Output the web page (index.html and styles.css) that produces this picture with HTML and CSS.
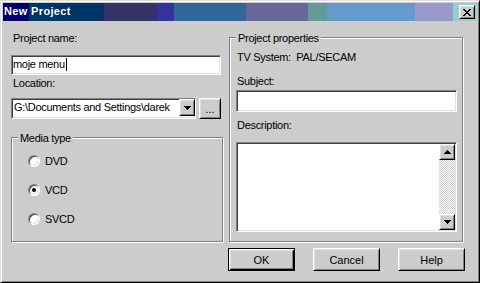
FILE: index.html
```html
<!DOCTYPE html>
<html lang="en">
<head>
  <meta charset="UTF-8">
  <meta name="viewport" content="width=device-width, initial-scale=1.0">
  <title>New Project</title>
  <link rel="stylesheet" href="styles.css">
</head>
<body>
  <div class="window">
    <div class="titlebar">
      <span class="title">New Project</span>
      <button type="button" class="raised close" aria-label="Close">
        <svg width="8" height="7" viewBox="0 0 8 7"><path d="M0 0h2v1h-2zM6 0h2v1h-2zM1 1h2v1h-2zM5 1h2v1h-2zM2 2h4v1h-4zM3 3h2v1h-2zM2 4h4v1h-4zM1 5h2v1h-2zM5 5h2v1h-2zM0 6h2v1h-2zM6 6h2v1h-2z"/></svg>
      </button>
    </div>

    <div class="content">
      <div class="col-left">
        <div class="label">Project name:</div>
        <div class="sunken name-edit">moje menu<span class="caret"></span></div>

        <div class="label location-label">Location:</div>
        <div class="location-row">
          <div class="sunken combo">
            <span class="combo-text">G:\Documents and Settings\darek</span>
            <span class="raised combo-btn">
              <svg width="7" height="4" viewBox="0 0 7 4"><path d="M0 0h7v1h-1v1h-1v1h-1v1h-1v-1h-1v-1h-1v-1h-1z"/></svg>
            </span>
          </div>
          <button type="button" class="raised btn browse">...</button>
        </div>

        <div class="group media">
          <div class="group-title">Media type</div>
          <div class="radio-list">
            <div class="radio-row"><span class="radio"></span>DVD</div>
            <div class="radio-row"><span class="radio checked"></span>VCD</div>
            <div class="radio-row"><span class="radio"></span>SVCD</div>
          </div>
        </div>
      </div>

      <div class="col-right">
        <div class="group props">
          <div class="group-title">Project properties</div>
          <div class="group-body">
            <div class="label tv">TV System:&nbsp; PAL/SECAM</div>
            <div class="label subject-label">Subject:</div>
            <div class="sunken subject"></div>
            <div class="label desc-label">Description:</div>
            <div class="sunken memo">
              <div class="memo-area"></div>
              <div class="scrollbar">
                <span class="raised sb-btn">
                  <svg width="7" height="4" viewBox="0 0 7 4"><path d="M3 0h1v1h1v1h1v1h1v1H0V3h1V2h1V1h1z"/></svg>
                </span>
                <span class="sb-track"></span>
                <span class="raised sb-btn">
                  <svg width="7" height="4" viewBox="0 0 7 4"><path d="M0 0h7v1h-1v1h-1v1h-1v1h-1v-1h-1v-1h-1v-1h-1z"/></svg>
                </span>
              </div>
            </div>
          </div>
        </div>

        <div class="buttons">
          <button type="button" class="btn default">OK</button>
          <button type="button" class="raised btn">Cancel</button>
          <button type="button" class="raised btn">Help</button>
        </div>
      </div>
    </div>
  </div>
</body>
</html>
```

FILE: styles.css
```css
body {
  margin: 0;
  font-family: "Liberation Sans", Arial, sans-serif;
  font-size: 11px;
  letter-spacing: -0.3px;
  color: #000;
}
.window {
  width: 480px;
  height: 283px;
  box-sizing: border-box;
  padding: 2px;
  background: #ccc;
  border: 1px solid;
  border-color: #dfdfdf #000 #000 #dfdfdf;
  box-shadow: inset 1px 1px #fff, inset -1px -1px #808080;
}

/* bevels */
.raised {
  box-sizing: border-box;
  background: #ccc;
  border: 1px solid;
  border-color: #fff #000 #000 #fff;
  box-shadow: inset 1px 1px #dfdfdf, inset -1px -1px #808080;
}
.sunken {
  box-sizing: border-box;
  background: #fff;
  border: 1px solid;
  border-color: #808080 #fff #fff #808080;
  box-shadow: inset 1px 1px #404040, inset -1px -1px #dfdfdf;
}

/* title bar */
.titlebar {
  display: flex;
  height: 18px;
  background: linear-gradient(to right,
    #000066 0 26px, #003366 26px 101px, #333366 101px 154px,
    #333399 154px 171px, #336699 171px 243px, #666699 243px 305px,
    #669999 305px 324px, #6699cc 324px 412px, #9999cc 412px 450px,
    #99cccc 450px);
}
.title {
  flex: 1;
  padding-left: 1px;
  color: #fff;
  font-weight: bold;
  line-height: 16px;
  letter-spacing: 0.35px;
}
.close {
  display: flex;
  align-items: center;
  justify-content: center;
  width: 16px;
  height: 14px;
  margin: 2px 2px 0 0;
  padding: 0;
}

/* layout */
.content {
  display: grid;
  grid-template-columns: 212px 237px;
  column-gap: 5px;
  padding-left: 8px;
}
.col-left {
  display: flex;
  flex-direction: column;
  padding-top: 11px;
}
.col-right {
  display: flex;
  flex-direction: column;
  padding-top: 16px;
}
.label {
  line-height: 13px;
  padding-left: 2px;
}

/* left column */
.name-edit {
  width: 210px;
  height: 20px;
  margin-top: 10px;
  padding-left: 1px;
  line-height: 16px;
  white-space: nowrap;
}
.caret {
  display: inline-block;
  width: 1px;
  height: 13px;
  margin-left: 1px;
  vertical-align: -3px;
  background: #000;
}
.location-label {
  margin-top: 2px;
}
.location-row {
  display: flex;
  gap: 3px;
  margin-top: 8px;
  height: 21px;
}
.combo {
  display: flex;
  width: 185px;
  overflow: hidden;
}
.combo-text {
  flex: 1;
  min-width: 0;
  overflow: hidden;
  white-space: nowrap;
  padding-left: 2px;
  line-height: 17px;
}
.combo-btn {
  display: flex;
  align-items: center;
  justify-content: center;
  flex: 0 0 16px;
  height: 17px;
}
.btn {
  font: inherit;
  color: #000;
  padding: 0;
}
.browse {
  width: 22px;
  height: 21px;
}

/* group boxes */
.group {
  box-sizing: border-box;
  border: 1px solid #808080;
  box-shadow: 1px 1px #fff, inset 1px 1px #fff;
}
.group-title {
  display: table;
  margin: -6px 0 0 6px;
  padding: 0 2px;
  line-height: 13px;
  background: #ccc;
}
.media {
  height: 105px;
  margin-top: 18px;
}
.radio-list {
  display: flex;
  flex-direction: column;
  gap: 17px;
  padding: 10px 0 0 16px;
}
.radio-row {
  display: flex;
  align-items: center;
  gap: 5px;
  height: 12px;
  line-height: 12px;
}
.radio {
  position: relative;
  width: 12px;
  height: 12px;
  box-sizing: border-box;
  border-radius: 50%;
  background: #fff;
  border: 1px solid;
  border-color: #808080 #fff #fff #808080;
  box-shadow: inset 1px 1px #404040, inset -1px -1px #dfdfdf;
}
.radio.checked::after {
  content: "";
  position: absolute;
  left: 3px;
  top: 3px;
  width: 4px;
  height: 4px;
  border-radius: 50%;
  background: #000;
}

/* right column */
.props {
  width: 234px;
  height: 205px;
  margin-left: 1px;
}
.group-body {
  display: flex;
  flex-direction: column;
  padding: 0 5px 0 6px;
}
.group-body .label {
  padding-left: 1px;
}
.tv {
  margin-top: 6px;
}
.subject-label {
  margin-top: 11px;
}
.subject {
  height: 22px;
  margin-top: 2px;
}
.desc-label {
  margin-top: 7px;
}
.memo {
  display: flex;
  height: 90px;
  margin-top: 10px;
  padding: 1px;
}
.memo-area {
  flex: 1;
}
.scrollbar {
  display: flex;
  flex-direction: column;
  width: 16px;
  background: repeating-conic-gradient(#ccc 0 25%, #fff 0 50%) 0 0 / 2px 2px;
}
.sb-btn {
  display: flex;
  align-items: center;
  justify-content: center;
  height: 16px;
}
.sb-track {
  flex: 1;
}

.buttons {
  display: flex;
  justify-content: space-between;
  margin-top: 6px;
}
.buttons .btn {
  width: 67px;
  height: 23px;
}
.default {
  background: #ccc;
  box-sizing: border-box;
  border: 1px solid #000;
  box-shadow: inset 1px 1px #fff, inset -1px -1px #000,
    inset 2px 2px #dfdfdf, inset -2px -2px #808080;
}
```
